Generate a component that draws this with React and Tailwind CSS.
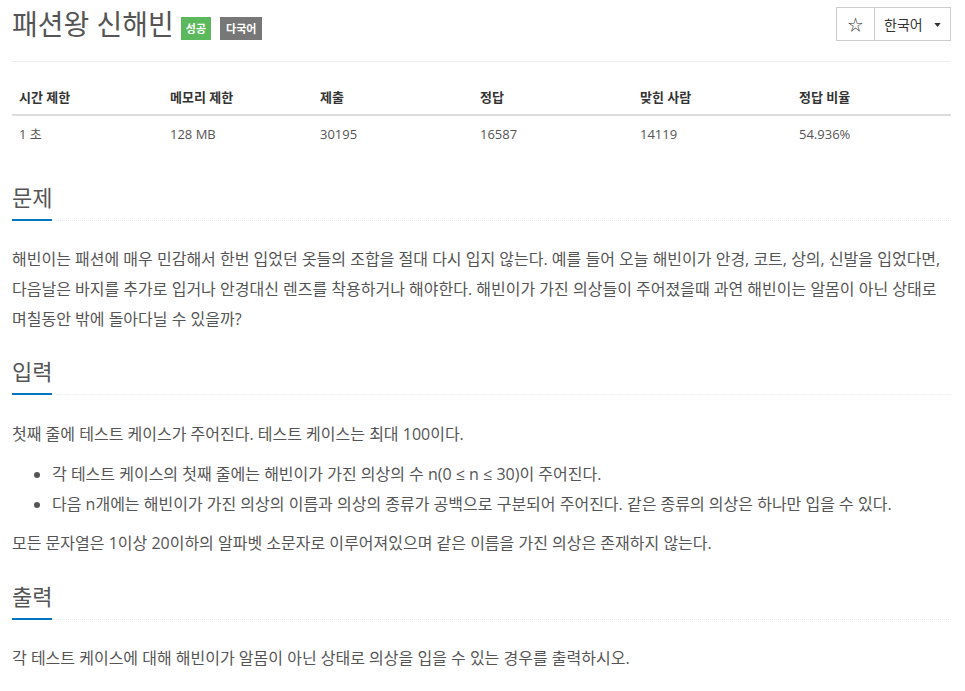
const font = { fontFamily: '"Open Sans", "Noto Sans CJK KR", sans-serif' };

const headers = ['시간 제한', '메모리 제한', '제출', '정답', '맞힌 사람', '정답 비율'];
const values = ['1 초', '128 MB', '30195', '16587', '14119', '54.936%'];

function Headline({ children }) {
  return (
    <div className="flex border-b border-dotted border-[#e4e9f0]">
      <h2 className="-mb-px border-b-2 border-[#0076c0] pb-[8px] text-[22px] leading-[28px] text-[#555]">
        {children}
      </h2>
    </div>
  );
}

export default function App() {
  return (
    <div className="min-h-[691px] bg-white pl-[12px] pr-[14px] text-[#555]" style={font}>
      <div className="flex h-[62px] items-start justify-between border-b border-[#eee]">
        <div className="flex items-center pt-[8px]">
          <h1 className="text-[28px] leading-[32px] text-[#555]">패션왕 신해빈</h1>
          <span className="ml-[7px] mt-[8px] bg-[#5cb85c] px-[5px] py-[4px] text-[11px] font-bold leading-[15px] text-white">
            성공
          </span>
          <span className="ml-[9px] mt-[8px] bg-[#777] px-[6px] py-[4px] text-[11px] font-bold leading-[15px] text-white">
            다국어
          </span>
        </div>
        <div className="mt-[7px] flex h-[34px] border border-[#ccc] text-[14px] text-[#333]">
          <button className="flex w-[38px] items-center justify-center border-r border-[#ccc] text-[15px]">☆</button>
          <button className="flex w-[75px] items-center gap-[11px] pl-[9px]">
            <span>한국어</span>
            <svg width="7" height="4" viewBox="0 0 8 5" className="mt-[1px]">
              <path d="M0 0h8L4 5z" fill="#333" />
            </svg>
          </button>
        </div>
      </div>

      <div className="mt-[18px] text-[13px] leading-[20px]">
        <div className="grid grid-cols-[151px_150px_160px_160px_159px_1fr] border-b-2 border-[#ddd] font-bold text-[#333]">
          {headers.map((h) => (
            <div key={h} className="px-[7px] py-[7px]">{h}</div>
          ))}
        </div>
        <div className="grid grid-cols-[151px_150px_160px_160px_159px_1fr] text-[#555]">
          {values.map((v) => (
            <div key={v} className="px-[7px] py-[8px]">{v}</div>
          ))}
        </div>
      </div>

      <section className="mt-[31px]">
        <Headline>문제</Headline>
        <p className="mt-[23px] text-[16px] leading-[30px]">
          해빈이는 패션에 매우 민감해서 한번 입었던 옷들의 조합을 절대 다시 입지 않는다. 예를 들어 오늘 해빈이가 안경, 코트, 상의, 신발을 입었다면, 다음날은 바지를 추가로 입거나 안경대신 렌즈를 착용하거나 해야한다. 해빈이가 가진 의상들이 주어졌을때 과연 해빈이는 알몸이 아닌 상태로 며칠동안 밖에 돌아다닐 수 있을까?
        </p>
      </section>

      <section className="mt-[23px]">
        <Headline>입력</Headline>
        <div className="mt-[24px] text-[16px] leading-[30px]">
          <p>첫째 줄에 테스트 케이스가 주어진다. 테스트 케이스는 최대 100이다.</p>
          <ul className="mt-[10px] list-disc pl-[40px]">
            <li>각 테스트 케이스의 첫째 줄에는 해빈이가 가진 의상의 수 n(0 ≤ n ≤ 30)이 주어진다.</li>
            <li>다음 n개에는 해빈이가 가진 의상의 이름과 의상의 종류가 공백으로 구분되어 주어진다. 같은 종류의 의상은 하나만 입을 수 있다.</li>
          </ul>
          <p className="mt-[9px]">모든 문자열은 1이상 20이하의 알파벳 소문자로 이루어져있으며 같은 이름을 가진 의상은 존재하지 않는다.</p>
        </div>
      </section>

      <section className="mt-[24px]">
        <Headline>출력</Headline>
        <p className="mt-[23px] text-[16px] leading-[30px]">
          각 테스트 케이스에 대해 해빈이가 알몸이 아닌 상태로 의상을 입을 수 있는 경우를 출력하시오.
        </p>
      </section>
    </div>
  );
}
